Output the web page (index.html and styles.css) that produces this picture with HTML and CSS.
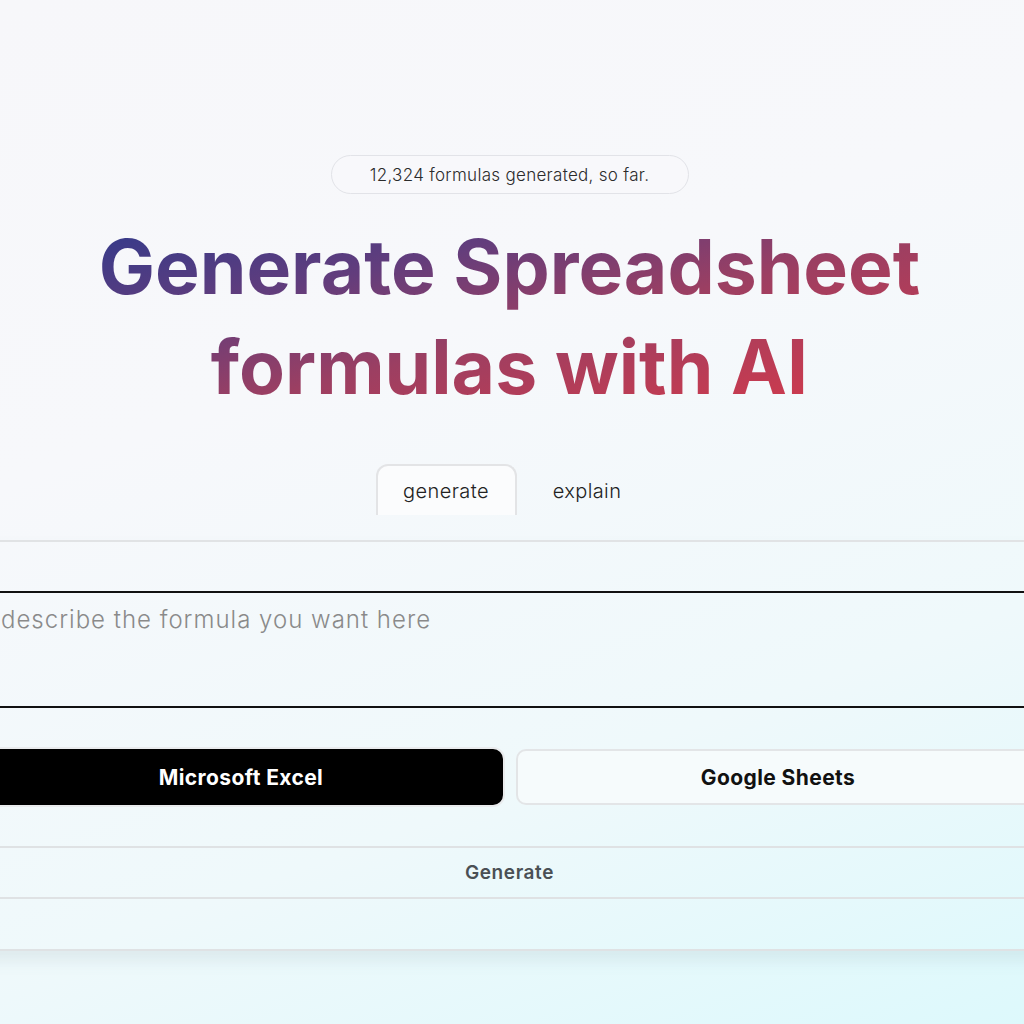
FILE: index.html
```html
<!DOCTYPE html>
<html lang="en">
<head>
<meta charset="utf-8">
<title>Generate Spreadsheet formulas with AI</title>
<link rel="stylesheet" href="styles.css">
</head>
<body>
<main class="page">
  <div class="pill">12,324 formulas generated, so far.</div>
  <h1 class="title">Generate Spreadsheet<br>formulas with AI</h1>
  <nav class="tabs">
    <div class="tab tab-active">generate</div>
    <div class="tab">explain</div>
  </nav>
  <section class="card">
    <div class="prompt">describe the formula you want here</div>
    <div class="choices">
      <div class="choice choice-on">Microsoft Excel</div>
      <div class="choice">Google Sheets</div>
    </div>
    <div class="generate">Generate</div>
  </section>
</main>
</body>
</html>
```
FILE: styles.css
```css
html, body {
  margin: 0;
  height: 100%;
}
body {
  width: 1024px;
  height: 1024px;
  overflow: hidden;
  font-family: "Inter", "Lato", sans-serif;
  background: linear-gradient(160deg, #f7f7fa 0%, #f7f8fb 35%, #eff9fb 70%, #ddf9fc 100%);
}
.page {
  display: flex;
  flex-direction: column;
  align-items: center;
  padding-top: 155px;
  padding-right: 5px;
}
.pill {
  box-sizing: border-box;
  height: 39px;
  width: 358px;
  border: 1px solid #e2e3e8;
  border-radius: 999px;
  display: flex;
  align-items: center;
  justify-content: center;
  font-size: 17px;
  font-weight: 300;
  letter-spacing: 0.3px;
  color: #2b2b2b;
  background: #f8f8fb;
}
.title {
  margin: 23px 0 0;
  font-size: 75px;
  line-height: 100px;
  font-weight: 700;
  letter-spacing: 0;
  text-align: center;
  background: linear-gradient(to bottom right, #2f3a8c 0%, #633d7c 30%, #9c3f62 55%, #dc3947 100%);
  -webkit-background-clip: text;
  background-clip: text;
  color: transparent;
}
.tabs {
  display: flex;
  margin-top: 47px;
  padding-left: 14px;
}
.tab {
  box-sizing: border-box;
  width: 141px;
  height: 51px;
  display: flex;
  align-items: center;
  justify-content: center;
  font-size: 20px;
  font-weight: 300;
  letter-spacing: 0.4px;
  color: #222;
  border: 2px solid transparent;
  border-bottom: none;
  border-radius: 12px 12px 0 0;
}
.tab-active {
  border-color: #e3e4e6;
  background: #fbfcfd;
}
.card {
  box-sizing: border-box;
  width: 1061px;
  margin-top: 25px;
  padding: 49px 0 50px;
  border-top: 2px solid #e1e3e5;
  border-bottom: 2px solid #dfe2e4;
  box-shadow: 0 10px 14px rgba(120, 150, 155, 0.14);
  display: flex;
  flex-direction: column;
}
.prompt {
  box-sizing: border-box;
  height: 117px;
  border: 2px solid #111;
  border-radius: 4px;
  padding: 11px 20px;
  font-size: 24px;
  font-weight: 300;
  letter-spacing: 1px;
  line-height: 32px;
  color: #8a8a8a;
}
.choices {
  display: grid;
  grid-template-columns: 1fr 1fr;
  gap: 13px;
  margin-top: 41px;
}
.choice {
  box-sizing: border-box;
  height: 56px;
  border: 2px solid #e3e5e7;
  border-radius: 10px;
  display: flex;
  align-items: center;
  justify-content: center;
  font-size: 21px;
  font-weight: 700;
  letter-spacing: 0.4px;
  color: #111;
  background: #f6fbfc;
}
.choice-on {
  background: #000;
  color: #fff;
  box-shadow: 0 0 0 2px #e9ebed;
  border-color: #000;
}
.generate {
  box-sizing: border-box;
  height: 53px;
  margin-top: 41px;
  border-top: 2px solid #dfe2e4;
  border-bottom: 2px solid #dfe2e4;
  display: flex;
  align-items: center;
  justify-content: center;
  font-size: 19px;
  font-weight: 600;
  letter-spacing: 0.6px;
  color: #4a5055;
}
```
